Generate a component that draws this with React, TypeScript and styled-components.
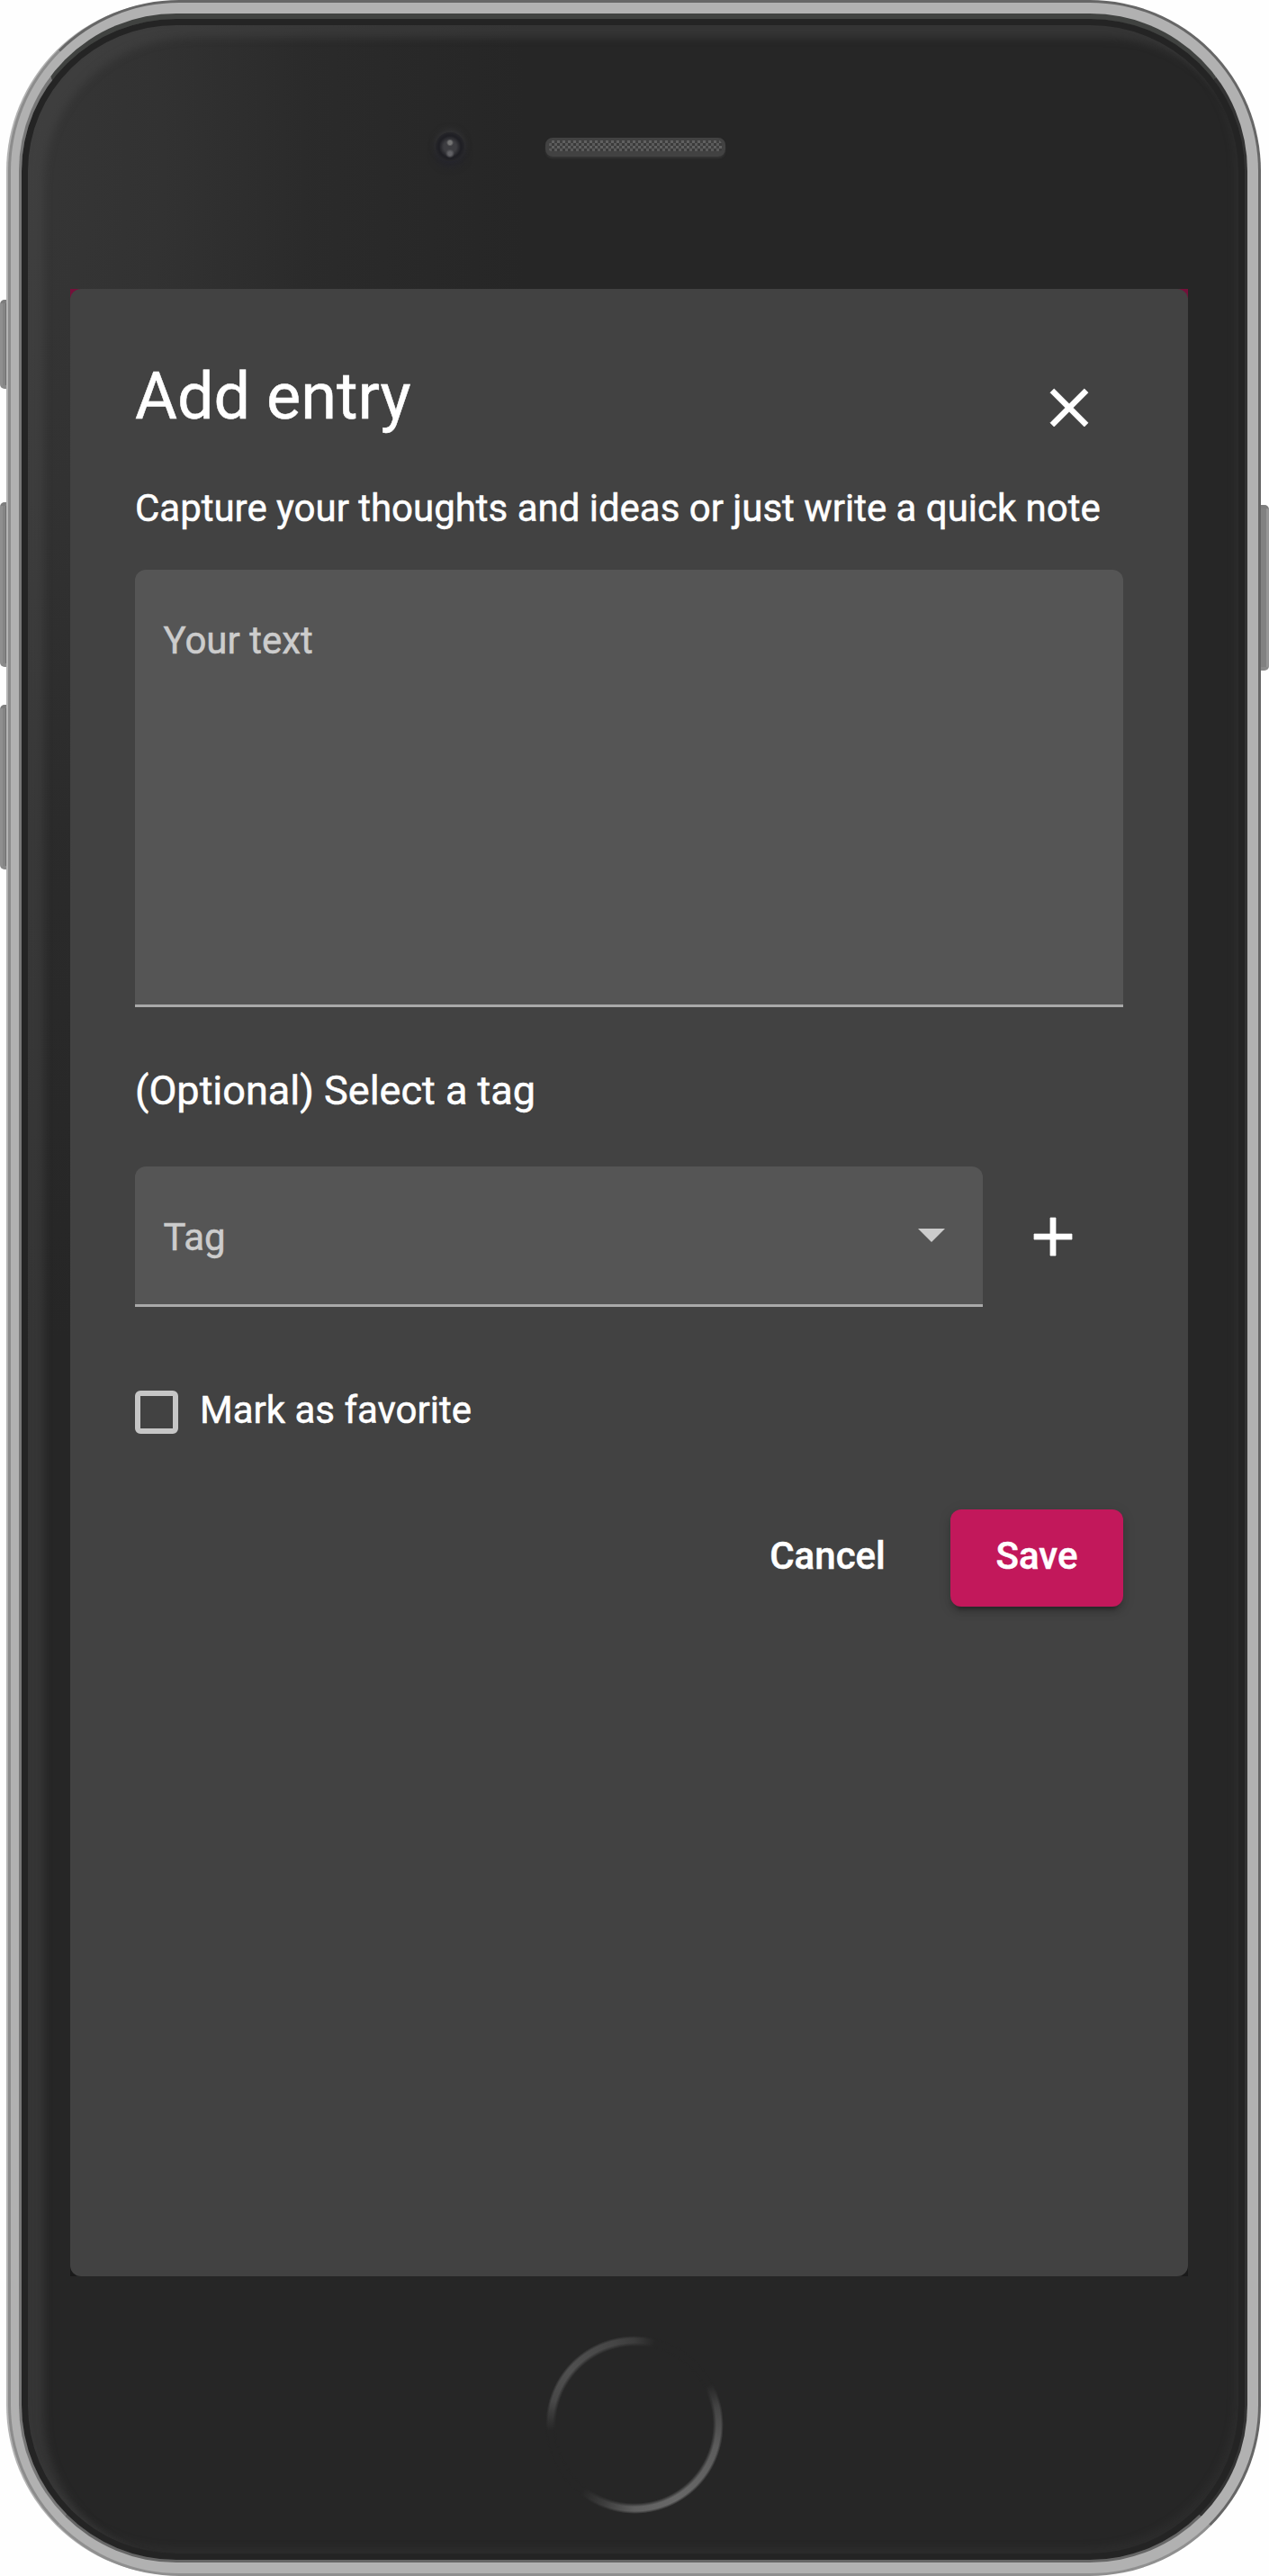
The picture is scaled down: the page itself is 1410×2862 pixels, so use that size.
import React from 'react';
import styled, { createGlobalStyle } from 'styled-components';

const GlobalStyle = createGlobalStyle`
  *, *::before, *::after { box-sizing: border-box; }
  body { margin: 0; background: #fff; font-family: Roboto, "Open Sans", sans-serif; }
`;

const Page = styled.main`
  position: relative;
  width: 1410px;
  height: 2862px;
  padding: 0 9px;
  background: #fefefe;
  overflow: hidden;
`;

const SideButton = styled.span<{ $side: 'left' | 'right'; $top: number; $height: number }>`
  position: absolute;
  top: ${(p) => p.$top}px;
  ${(p) => p.$side}: 0;
  width: 9px;
  height: ${(p) => p.$height}px;
  border-top: 4px solid #7d7d7d;
  border-bottom: 4px solid #8a8a8a;
  border-radius: ${(p) => (p.$side === 'left' ? '5px 0 0 5px' : '0 5px 5px 0')};
  background: ${(p) =>
    p.$side === 'left'
      ? 'linear-gradient(90deg, #8f8f8f 0 3px, #858585 3px 6px, #6f6f6f 6px)'
      : 'linear-gradient(90deg, #818181 0 6px, #969696 6px)'};
`;

const Frame = styled.div`
  position: relative;
  width: 1392px;
  height: 2862px;
  border: 3px solid;
  border-color: #666 #666 #8f8f8f #8c8c8c;
  border-radius: 190px;
  background: #b1b1b1;
  padding: 12px 12px 12px 9px;
  box-shadow: -3px 0 0 -1px #b4b4b4;
`;

const Body = styled.div`
  display: flex;
  flex-direction: column;
  width: 100%;
  height: 100%;
  border-style: solid;
  border-width: 6px 3px 3px 3px;
  border-color: #404240 #333 #666 #777;
  border-radius: 175px;
  background:
    radial-gradient(
      ellipse 560px 1300px at 0 170px,
      #363636 0,
      #323232 28%,
      rgba(43, 43, 43, 0.9) 58%,
      rgba(38, 38, 38, 0) 100%
    ),
    #262626;
  box-shadow: inset 0 0 0 7px #242424, inset 17px 13px 10px 8px rgba(80, 80, 80, 0.38),
    inset -4px -6px 8px 8px rgba(70, 70, 70, 0.18);
`;

const TopBezel = styled.div`
  display: flex;
  align-items: flex-start;
  height: 300px;
  padding: 126px 0 0 460px;
`;

const Camera = styled.span`
  width: 32px;
  height: 32px;
  border-radius: 50%;
  background: radial-gradient(circle at 50% 36%, #747474 0 2px, transparent 4px),
    radial-gradient(circle at 50% 74%, #626266 0 2px, transparent 5px),
    radial-gradient(circle, #3d3d41 0 7px, #1f1f24 12px 13px, #26262a 16px);
  box-shadow: 0 -3px 7px rgba(64, 64, 68, 0.5), 0 6px 9px rgba(36, 36, 46, 0.7);
`;

const Speaker = styled.span`
  width: 200px;
  height: 21px;
  margin: 6px 0 0 90px;
  border-radius: 8px;
  border: solid #424242;
  border-width: 3px 4px 6px;
  background: conic-gradient(#606060 25%, #3a3a3a 0 50%, #5a5a5a 0 75%, #404040 0) 0 0 / 6px 6px;
  box-shadow: 0 2px 2px #333;
`;

const Screen = styled.div`
  flex: none;
  width: 1242px;
  height: 2208px;
  margin-left: 54px;
  background: linear-gradient(#75103a 0 50%, #1a1a1a 0);
`;

const Dialog = styled.section`
  display: flex;
  flex-direction: column;
  height: 100%;
  padding: 72px;
  border-radius: 12px;
  background: #424242;
  color: #fff;
  font-size: 42px;
  line-height: 63px;
  -webkit-text-stroke: 0.5px currentColor;
`;

const Header = styled.header`
  display: flex;
  justify-content: space-between;
`;

const Title = styled.h1`
  margin: 0;
  font-size: 72px;
  line-height: 96px;
  font-weight: 400;
`;

const IconButton = styled.button<{ $margin: string }>`
  flex: none;
  width: 72px;
  height: 72px;
  margin: ${(p) => p.$margin};
  padding: 0;
  border: 0;
  background: none;
  color: #fff;
  svg {
    display: block;
    width: 72px;
    height: 72px;
    fill: currentColor;
    stroke: currentColor;
    stroke-width: 0.25;
  }
`;

const Intro = styled.p`
  margin: 44px 0 37px;
  white-space: nowrap;
  letter-spacing: -0.018px;
`;

const Field = styled.div<{ $width: number; $height: number }>`
  display: flex;
  justify-content: space-between;
  align-items: flex-start;
  width: ${(p) => p.$width}px;
  height: ${(p) => p.$height}px;
  padding: 47px 42px 0 31.5px;
  border-bottom: 3px solid #a9a9a9;
  border-radius: 12px 12px 0 0;
  background: #555;
  color: #ccc;
`;

const Arrow = styled.span`
  margin-top: 22px;
  border: 15px solid transparent;
  border-top-color: #ccc;
  border-bottom: 0;
`;

const Subheading = styled.h2`
  margin: 61px 0 53px;
  font-size: 45px;
  line-height: 63px;
  font-weight: 400;
`;

const TagRow = styled.div`
  display: flex;
`;

const CheckRow = styled.label`
  display: flex;
  align-items: flex-start;
  gap: 24px;
  margin-top: 83px;
`;

const Checkbox = styled.span`
  width: 48px;
  height: 48px;
  margin-top: 10px;
  border: 6px solid #c6c6c6;
  border-radius: 6px;
`;

const Actions = styled.footer`
  display: flex;
  justify-content: flex-end;
  gap: 24px;
  margin-top: 79px;
`;

const Button = styled.button<{ $primary?: boolean }>`
  height: 108px;
  width: ${(p) => (p.$primary ? 192 : 225)}px;
  padding: 0 0 5px;
  border: 0;
  border-radius: 12px;
  font: 500 42px/103px Roboto, sans-serif;
  text-align: center;
  color: #fff;
  background: ${(p) => (p.$primary ? '#c2185b' : 'transparent')};
  box-shadow: ${(p) =>
    p.$primary
      ? '0 9px 3px -6px rgba(0,0,0,.2), 0 6px 6px 0 rgba(0,0,0,.14), 0 3px 15px 0 rgba(0,0,0,.12)'
      : 'none'};
`;

const HomeButton = styled.span`
  width: 198px;
  height: 198px;
  margin: 66px 0 0 582px;
  border-radius: 50%;
  background: conic-gradient(
    #3c3c3c 0deg, #262626 14deg, #262626 62deg, #444 78deg, #5c5c5c 105deg, #686868 150deg,
    #606060 180deg, #3c3c3c 202deg, #262626 218deg, #262626 266deg, #484848 286deg, #505050 310deg,
    #464646 345deg, #3c3c3c 360deg
  );
  mask: radial-gradient(circle, transparent 87px, #000 91px 96px, transparent 99px);
`;

export default function App() {
  return (
    <>
      <GlobalStyle />
      <Page>
        <SideButton $side="left" $top={333} $height={99} />
        <SideButton $side="left" $top={558} $height={183} />
        <SideButton $side="left" $top={783} $height={183} />
        <SideButton $side="right" $top={561} $height={184} />
        <Frame>
          <Body>
            <TopBezel>
              <Camera />
              <Speaker />
            </TopBezel>
            <Screen>
              <Dialog role="dialog">
                <Header>
                  <Title>Add entry</Title>
                  <IconButton aria-label="Close" $margin="24px 24px 0 0">
                    <svg viewBox="0 0 24 24">
                      <path d="M19 6.41L17.59 5 12 10.59 6.41 5 5 6.41 10.59 12 5 17.59 6.41 19 12 13.41 17.59 19 19 17.59 13.41 12z" />
                    </svg>
                  </IconButton>
                </Header>
                <Intro>Capture your thoughts and ideas or just write a quick note</Intro>
                <Field $width={1098} $height={486}>
                  <span>Your text</span>
                </Field>
                <Subheading>(Optional) Select a tag</Subheading>
                <TagRow>
                  <Field $width={942} $height={156}>
                    <span>Tag</span>
                    <Arrow />
                  </Field>
                  <IconButton aria-label="Add tag" $margin="42px 0 0 42px">
                    <svg viewBox="0 0 24 24">
                      <path d="M19 13h-6v6h-2v-6H5v-2h6V5h2v6h6v2z" />
                    </svg>
                  </IconButton>
                </TagRow>
                <CheckRow>
                  <Checkbox />
                  <span>Mark as favorite</span>
                </CheckRow>
                <Actions>
                  <Button>Cancel</Button>
                  <Button $primary>Save</Button>
                </Actions>
              </Dialog>
            </Screen>
            <HomeButton />
          </Body>
        </Frame>
      </Page>
    </>
  );
}
